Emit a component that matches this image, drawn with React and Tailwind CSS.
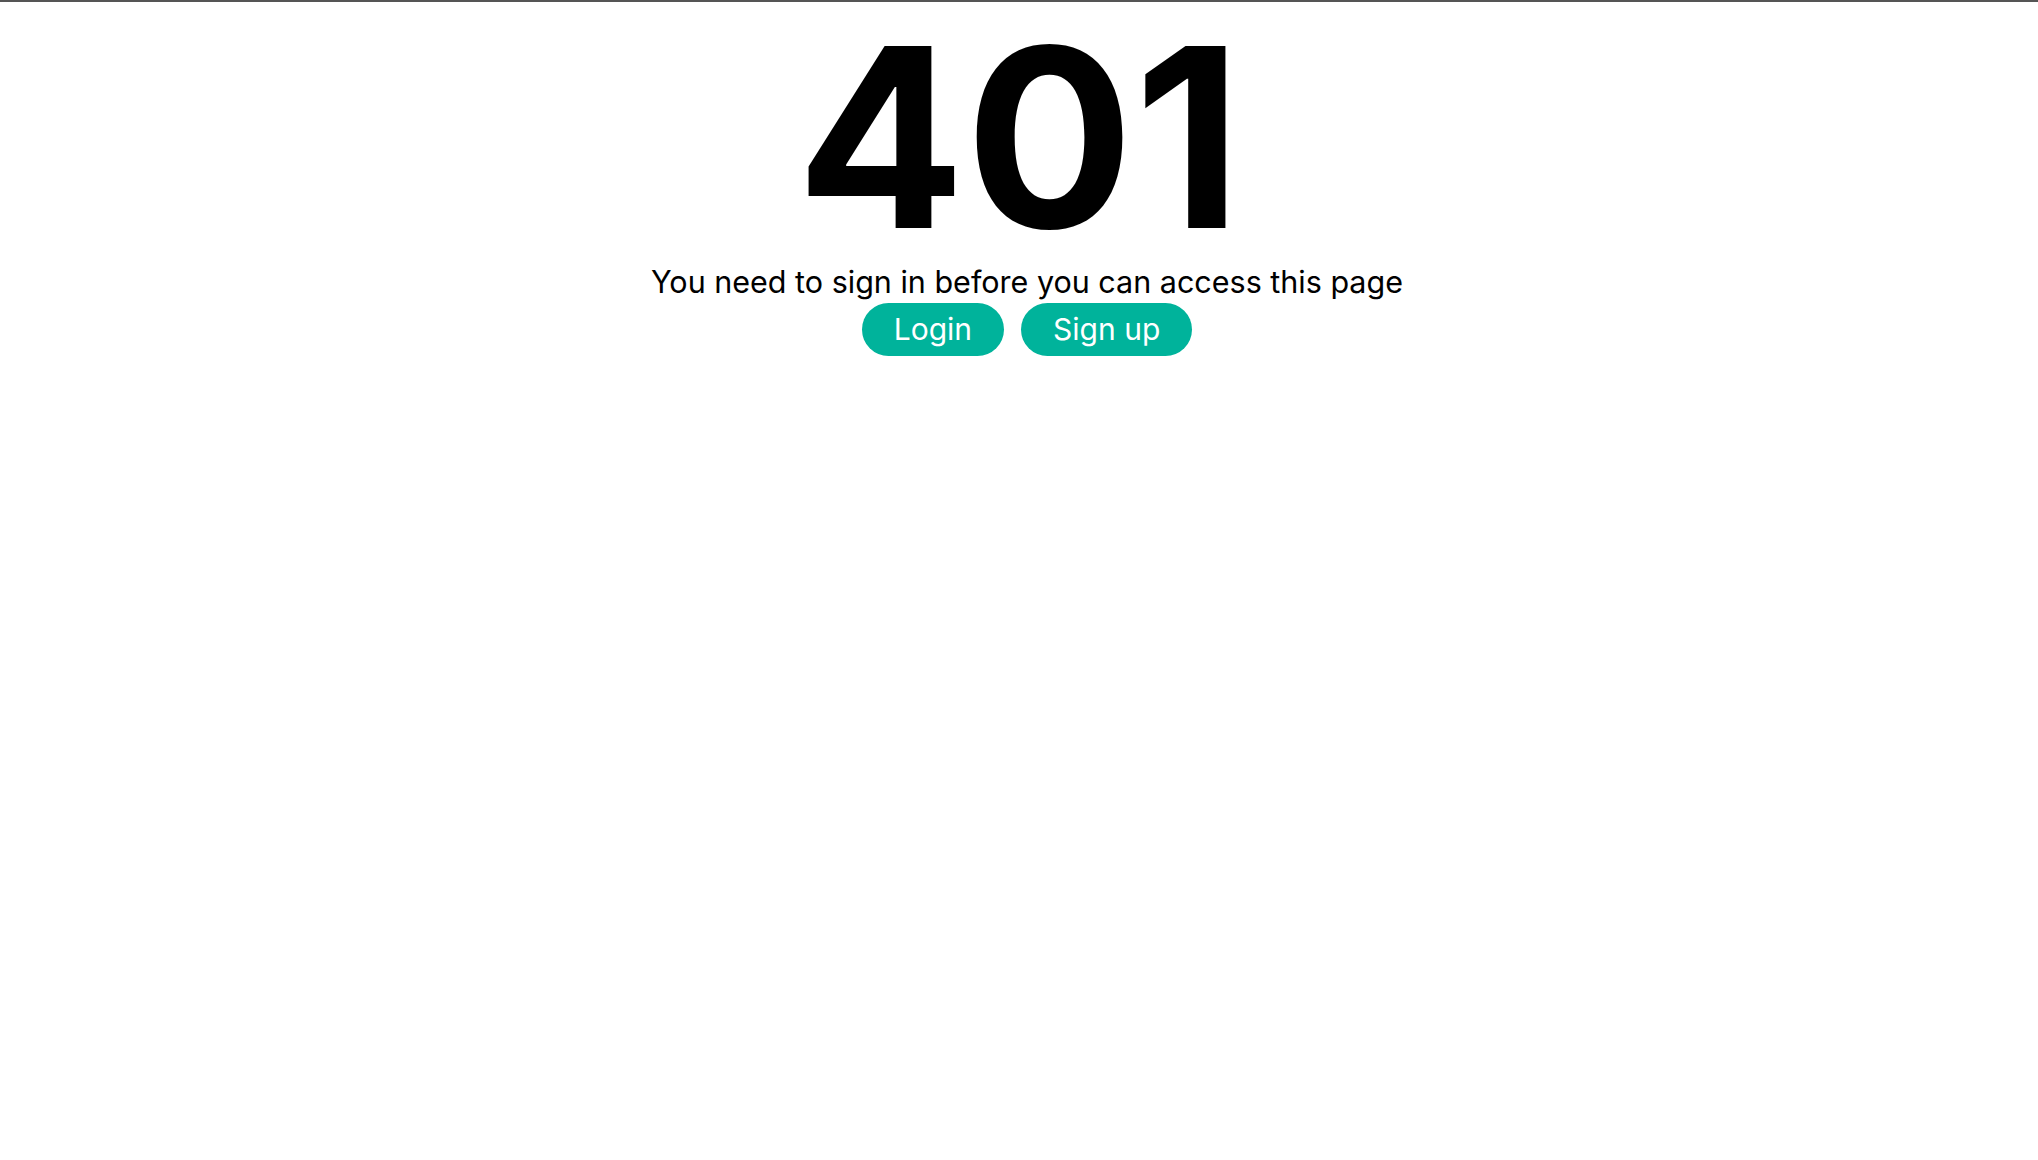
import React from 'react';

const App = () => {
  return (
    <div className="min-h-screen bg-white border-t-2 border-[#555555]" style={{ fontFamily: 'Inter, "Noto Sans", sans-serif' }}>
      <div className="flex flex-col items-center">
        <h1 className="text-[250px] leading-none font-bold text-black pt-[10px]">401</h1>
        <div className="flex flex-col items-center pl-[16px]">
          <p className="text-[30.5px] text-black mt-[1px] leading-[38px]">You need to sign in before you can access this page</p>
          <div className="flex gap-[17px] mt-[2px]">
            <button className="h-[53px] px-[32px] rounded-full bg-[#00b39b] text-white text-[30px]">Login</button>
            <button className="h-[53px] px-[32px] rounded-full bg-[#00b39b] text-white text-[30px]">Sign up</button>
          </div>
        </div>
      </div>
    </div>
  );
};

export default App;
